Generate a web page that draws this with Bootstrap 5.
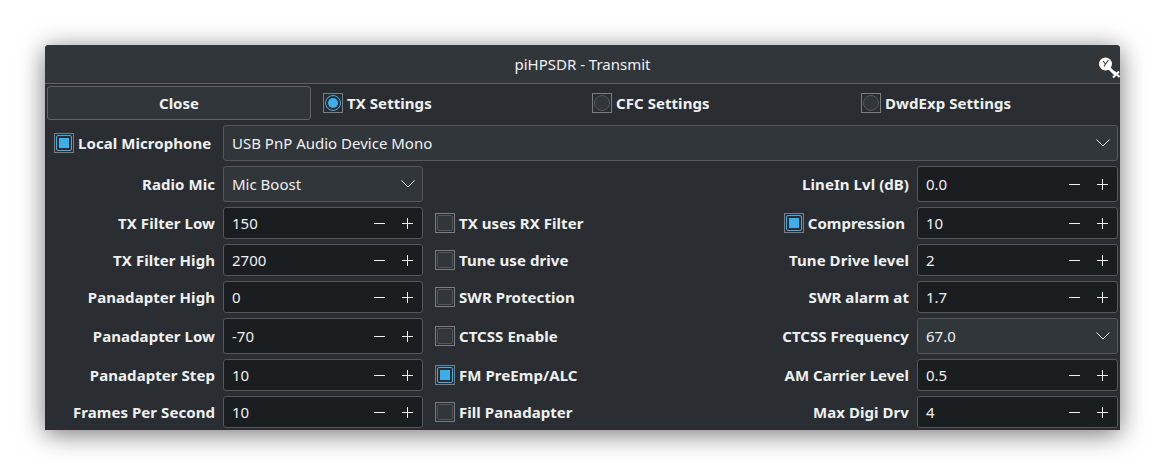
<!DOCTYPE html>
<html lang="en"><head><meta charset="utf-8"><title>piHPSDR - Transmit</title>
<link href="https://cdn.jsdelivr.net/npm/bootstrap@5.3.0/dist/css/bootstrap.min.css" rel="stylesheet">
<style>
html,body{height:100%;margin:0;background:#fff;overflow:hidden}
body{font-family:"Noto Sans",sans-serif;font-size:15px;color:#eff0f1}
.stage{padding:45px 45px 0}
.win{width:1075px;height:385px;background:#2a2e32;border-radius:4px 4px 0 0;box-shadow:0 4px 26px rgba(0,0,0,.55);overflow:hidden}
.tbar{height:39px;background:#31363b;border-bottom:1px solid #5f6265;position:relative;font-size:15px;line-height:39px;text-align:center}
.pin{position:absolute;right:0;top:10px}
.gridbody{padding:2px 2px 0 2px;row-gap:5px}
.h34{height:34px}.h36{height:36px}.h32{height:32px}
.closebtn{width:264px;height:34px;background:#31363b;border:1px solid #616569;border-radius:3px;font-weight:700;color:#eff0f1;font-size:15px;padding:0}
.lab{font-weight:700;white-space:nowrap;letter-spacing:.06px}
.lab1{width:168px;text-align:right;margin-right:8px}
.micwrap{padding-left:7px}
.cbx{width:20px;height:20px;border:1px solid #7b7e81;padding:1px;flex:none;margin-right:4px}
.cbx i{display:block;height:100%;border:1px solid #54585c;border-radius:2px;background:#31363b}
.cbx.on i{border-color:#3daee9;padding:2px;background:#2a2e32}
.cbx.on i::after{content:"";display:block;height:100%;background:#3daee9}
.rad i{border-radius:50%}
.rad.on i::after{border-radius:50%}
.spin,.combo{width:201px;height:100%;border:1px solid #54585c;border-radius:3px;padding:0 8px 0 8px;flex:none}
.spin{background:#1b1e20}
.combo{background:#31363b}
.narrow{width:200px}
.wide{width:895px}
.opt{padding-left:12px;width:269px}
.mid{width:349px;padding-left:12px}
.rightcol{flex:1 1 auto}
.lab2{margin-right:8px}
.lab3{margin-right:12px;letter-spacing:0}
.pm{flex:none;display:block}
.chev{flex:none;display:block;margin-right:-1px}
</style></head><body>
<svg width="0" height="0" class="position-absolute"><defs>
<symbol id="pm" viewBox="0 0 40 12"><path d="M0 6.500h11M28 6.500h11M33.500 1v11" stroke="#eff0f1" fill="none"/></symbol>
<symbol id="ch" viewBox="0 0 14 8"><path d="M.5.5L7 7 13.500.5" stroke="#eff0f1" fill="none"/></symbol>
</defs></svg>
<div class="stage"><div class="win">
<div class="tbar">piHPSDR - Transmit
<svg class="pin" width="22" height="24" viewBox="0 0 22 24"><circle cx="7.500" cy="9" r="6.500" fill="#fff"/><path d="M5 6l2.500 3M10.500 5L7.500 9 6 11.500" stroke="#31363b" stroke-width="1.100" fill="none"/><path d="M10 12l8 8" stroke="#fff" stroke-width="3"/><path d="M15 22.500l6-6M16 16.500l5.500 5.500" stroke="#fff" stroke-width="2"/></svg>
</div>
<div class="gridbody d-flex flex-column">
<div class="d-flex h34 align-items-center">
<button type="button" class="closebtn">Close</button>
<div class="d-flex align-items-center opt"><span class="cbx rad on"><i></i></span><span class="lab">TX Settings</span></div>
<div class="d-flex align-items-center opt"><span class="cbx rad"><i></i></span><span class="lab">CFC Settings</span></div>
<div class="d-flex align-items-center opt"><span class="cbx rad"><i></i></span><span class="lab">DwdExp Settings</span></div>
</div>
<div class="d-flex h36 align-items-center"><div class="d-flex align-items-center lab1 micwrap"><span class="cbx on"><i></i></span><span class="lab">Local Microphone</span></div>
<div class="combo wide d-flex align-items-center justify-content-between"><span>USB PnP Audio Device Mono</span><svg class="chev" width="14" height="8"><use href="#ch"/></svg></div></div>
<div class="d-flex h36 align-items-center"><div class="lab lab1">Radio Mic</div><div class="combo narrow d-flex align-items-center justify-content-between"><span>Mic Boost</span><svg class="chev" width="14" height="8"><use href="#ch"/></svg></div><div class="mid"></div><div class="rightcol d-flex justify-content-end align-items-center h-100"><span class="lab lab2">LineIn Lvl (dB)</span><div class="spin d-flex align-items-center"><span class="flex-grow-1">0.0</span><svg class="pm" width="40" height="12"><use href="#pm"/></svg></div></div></div>

<div class="d-flex h32 align-items-center"><div class="lab lab1">TX Filter Low</div><div class="spin narrow d-flex align-items-center"><span class="flex-grow-1">150</span><svg class="pm" width="40" height="12"><use href="#pm"/></svg></div><div class="mid d-flex align-items-center"><span class="cbx"><i></i></span><span class="lab">TX uses RX Filter</span></div><div class="rightcol d-flex justify-content-end align-items-center h-100"><span class="cbx on"><i></i></span><span class="lab lab3">Compression</span><div class="spin d-flex align-items-center"><span class="flex-grow-1">10</span><svg class="pm" width="40" height="12"><use href="#pm"/></svg></div></div></div>

<div class="d-flex h32 align-items-center"><div class="lab lab1">TX Filter High</div><div class="spin narrow d-flex align-items-center"><span class="flex-grow-1">2700</span><svg class="pm" width="40" height="12"><use href="#pm"/></svg></div><div class="mid d-flex align-items-center"><span class="cbx"><i></i></span><span class="lab">Tune use drive</span></div><div class="rightcol d-flex justify-content-end align-items-center h-100"><span class="lab lab2">Tune Drive level</span><div class="spin d-flex align-items-center"><span class="flex-grow-1">2</span><svg class="pm" width="40" height="12"><use href="#pm"/></svg></div></div></div>

<div class="d-flex h32 align-items-center"><div class="lab lab1">Panadapter High</div><div class="spin narrow d-flex align-items-center"><span class="flex-grow-1">0</span><svg class="pm" width="40" height="12"><use href="#pm"/></svg></div><div class="mid d-flex align-items-center"><span class="cbx"><i></i></span><span class="lab">SWR Protection</span></div><div class="rightcol d-flex justify-content-end align-items-center h-100"><span class="lab lab2">SWR alarm at</span><div class="spin d-flex align-items-center"><span class="flex-grow-1">1.7</span><svg class="pm" width="40" height="12"><use href="#pm"/></svg></div></div></div>

<div class="d-flex h36 align-items-center"><div class="lab lab1">Panadapter Low</div><div class="spin narrow d-flex align-items-center"><span class="flex-grow-1">-70</span><svg class="pm" width="40" height="12"><use href="#pm"/></svg></div><div class="mid d-flex align-items-center"><span class="cbx"><i></i></span><span class="lab">CTCSS Enable</span></div><div class="rightcol d-flex justify-content-end align-items-center h-100"><span class="lab lab2">CTCSS Frequency</span><div class="combo d-flex align-items-center justify-content-between"><span>67.0</span><svg class="chev" width="14" height="8"><use href="#ch"/></svg></div></div></div>

<div class="d-flex h32 align-items-center"><div class="lab lab1">Panadapter Step</div><div class="spin narrow d-flex align-items-center"><span class="flex-grow-1">10</span><svg class="pm" width="40" height="12"><use href="#pm"/></svg></div><div class="mid d-flex align-items-center"><span class="cbx on"><i></i></span><span class="lab">FM PreEmp/ALC</span></div><div class="rightcol d-flex justify-content-end align-items-center h-100"><span class="lab lab2">AM Carrier Level</span><div class="spin d-flex align-items-center"><span class="flex-grow-1">0.5</span><svg class="pm" width="40" height="12"><use href="#pm"/></svg></div></div></div>

<div class="d-flex h32 align-items-center"><div class="lab lab1">Frames Per Second</div><div class="spin narrow d-flex align-items-center"><span class="flex-grow-1">10</span><svg class="pm" width="40" height="12"><use href="#pm"/></svg></div><div class="mid d-flex align-items-center"><span class="cbx"><i></i></span><span class="lab">Fill Panadapter</span></div><div class="rightcol d-flex justify-content-end align-items-center h-100"><span class="lab lab2">Max Digi Drv</span><div class="spin d-flex align-items-center"><span class="flex-grow-1">4</span><svg class="pm" width="40" height="12"><use href="#pm"/></svg></div></div></div>
</div></div></div>
</body></html>
